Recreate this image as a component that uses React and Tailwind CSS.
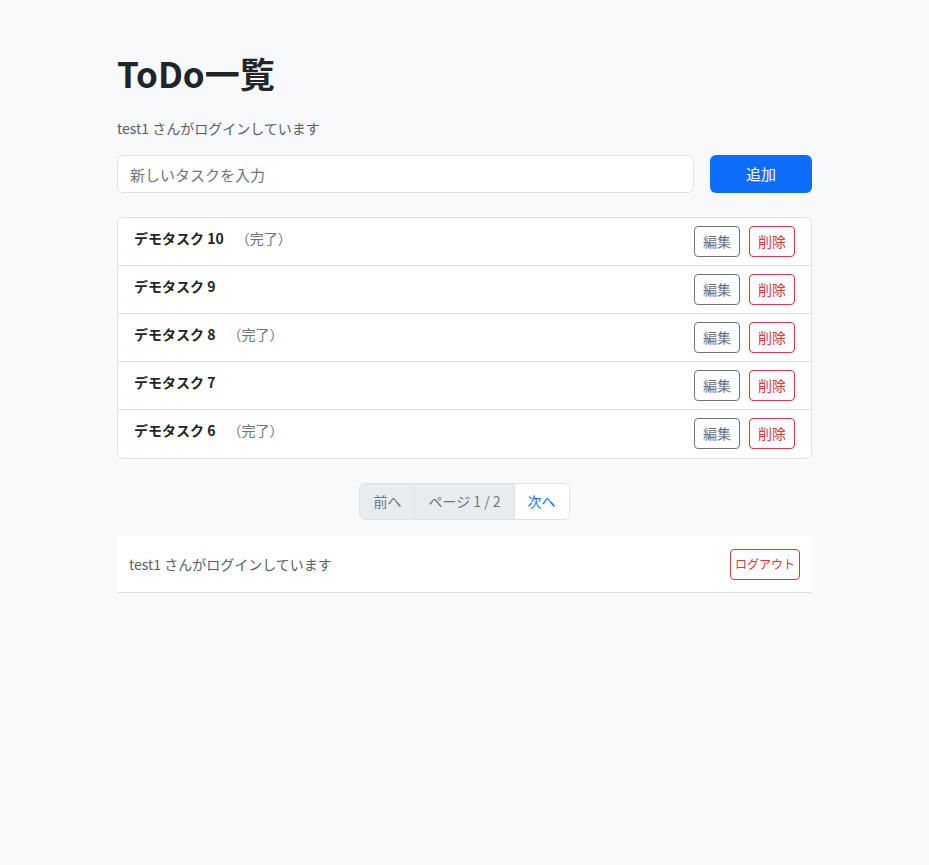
const tasks = [
  { id: 10, title: "デモタスク 10", done: true },
  { id: 9, title: "デモタスク 9", done: false },
  { id: 8, title: "デモタスク 8", done: true },
  { id: 7, title: "デモタスク 7", done: false },
  { id: 6, title: "デモタスク 6", done: true },
];

const font = { fontFamily: '"Noto Sans CJK JP", "Noto Sans", sans-serif' };

const App = () => {
  return (
    <div className="min-h-[865px] bg-[#f8f9fa] text-[#212529]" style={font}>
      <div className="w-[695px] ml-[117px] pt-[51px]">
        <h1 className="text-[35px] font-semibold leading-[43px]">ToDo一覧</h1>
        <p className="mt-6 text-[14px] leading-[21px] text-[#595f66]">test1 さんがログインしています</p>

        <div className="mt-4 flex gap-4">
          <input
            type="text"
            placeholder="新しいタスクを入力"
            className="flex-1 h-[38px] rounded-md border border-[#dee2e6] bg-white px-3 text-[15px] placeholder:text-[#6c757d] outline-none"
          />
          <button className="w-[102px] h-[38px] rounded-md bg-[#0d6efd] text-white text-[15px]">追加</button>
        </div>

        <ul className="mt-6 rounded-md border border-[#dee2e6] bg-white">
          {tasks.map((t, i) => (
            <li
              key={t.id}
              className={
                "flex items-start justify-between px-4 py-2 h-12 " +
                (i < tasks.length - 1 ? "border-b border-[#dee2e6]" : "")
              }
            >
              <div className="flex items-center h-6 text-[14px]">
                <span className="font-semibold">{t.title}</span>
                {t.done && <span className="ml-3 text-[#6c757d] text-[14px]">（完了）</span>}
              </div>
              <div className="flex gap-[9px]">
                <button className="w-[46px] h-[31px] rounded border border-[#6c757d] text-[#6c757d] text-[14px]">編集</button>
                <button className="w-[46px] h-[31px] rounded border border-[#dc3545] text-[#dc3545] text-[14px]">削除</button>
              </div>
            </li>
          ))}
        </ul>

        <div className="mt-6 flex justify-center">
          <div className="flex h-[37px] rounded-md border border-[#dee2e6] overflow-hidden text-[14px] whitespace-nowrap">
            <button className="px-[13px] bg-[#e9ecef] text-[#6c757d] border-r border-[#dee2e6]">前へ</button>
            <span className="px-[13px] flex items-center bg-[#e9ecef] text-[#6c757d] border-r border-[#dee2e6]">ページ 1 / 2</span>
            <button className="px-[13px] bg-white text-[#0d6efd]">次へ</button>
          </div>
        </div>

        <div className="mt-4 flex items-center justify-between h-[57px] bg-white border-b border-[#dee2e6] px-3">
          <span className="text-[14px] text-[#595f66]">test1 さんがログインしています</span>
          <button className="w-[70px] h-[31px] rounded border border-[#dc3545] text-[#dc3545] text-[12px] whitespace-nowrap">ログアウト</button>
        </div>
      </div>
    </div>
  );
};

export default App;
